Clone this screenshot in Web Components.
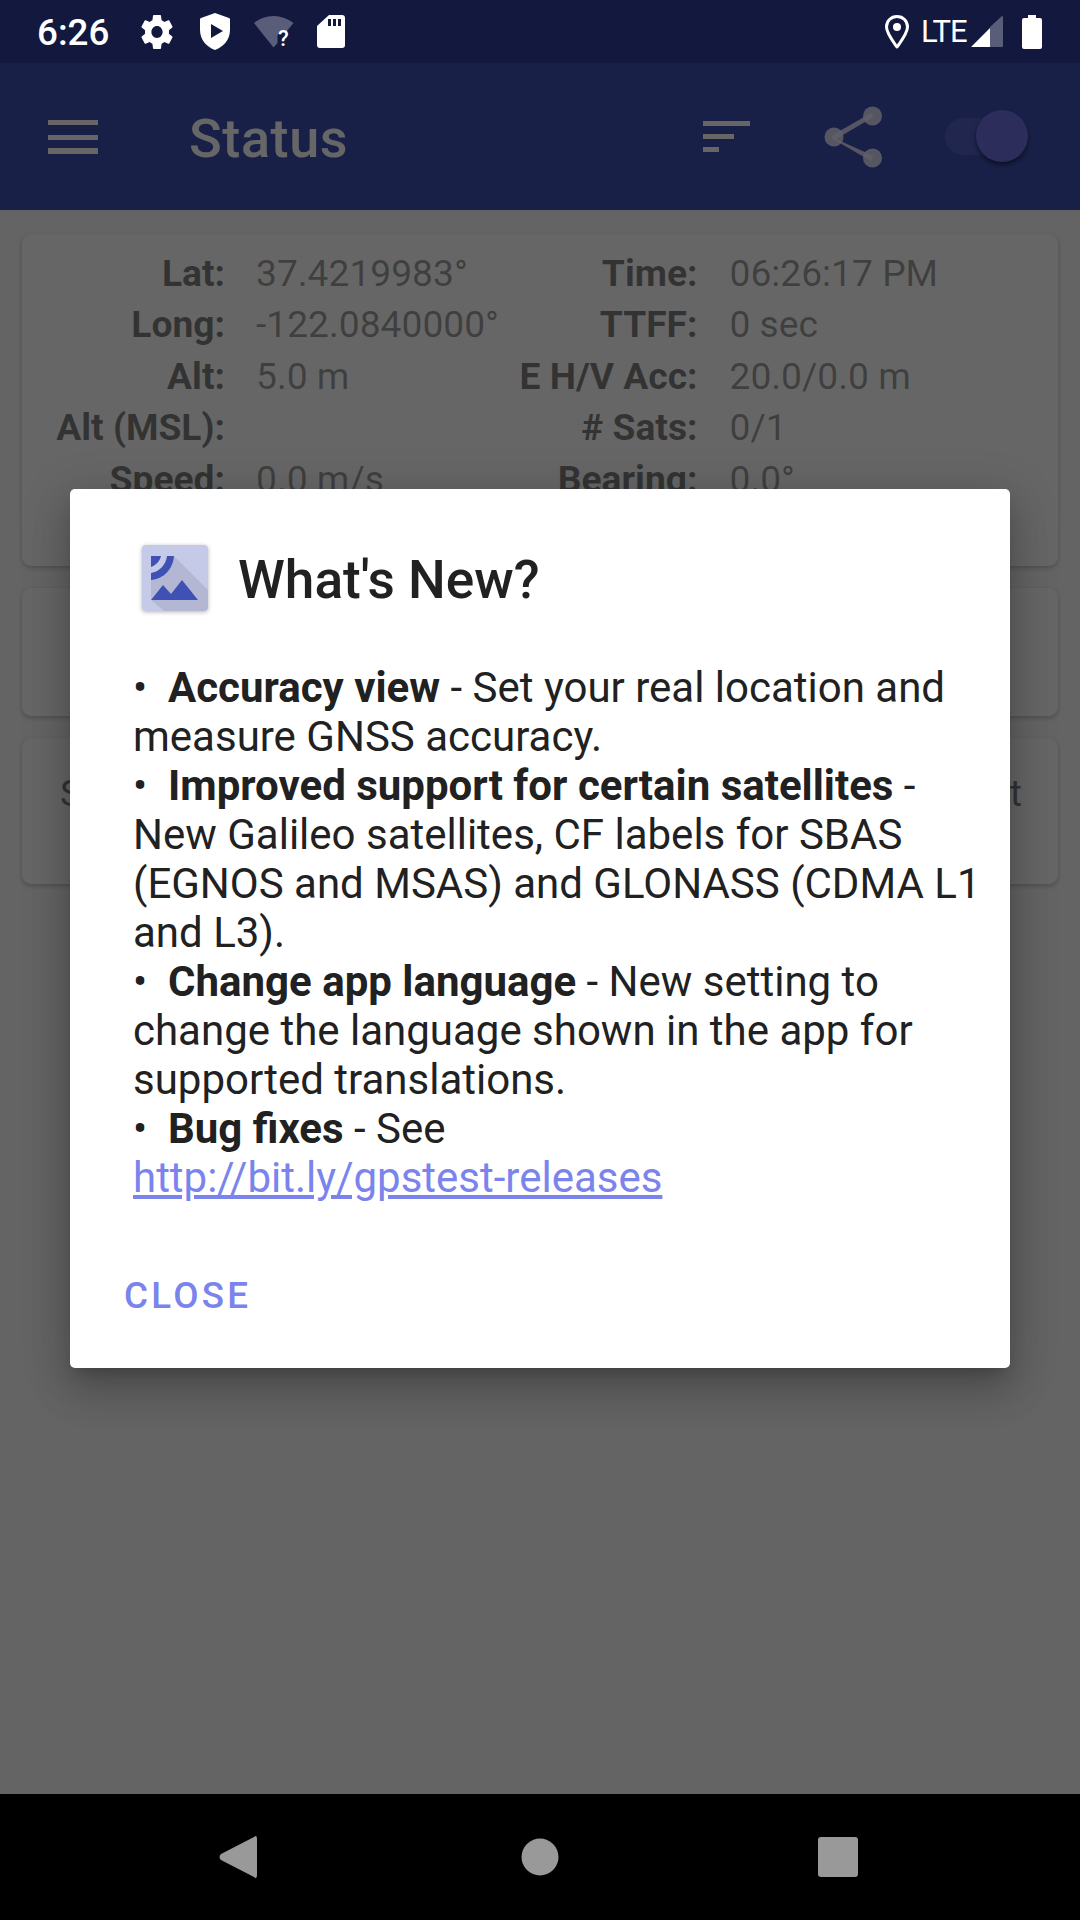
<!DOCTYPE html>
<html>
<head>
<meta charset="utf-8">
<title>GPSTest</title>
<style>
    html, body { margin: 0; padding: 0; background: #000; }
</style>
</head>
<body>
<gps-app></gps-app>
<script>
window.customElements.define("status-bar", class extends HTMLElement {
    #template = `
        <style>
            :host {
                display: flex;
                align-items: center;
                height: 63px;
                background: #13183f;
                color: #fff;
                font-family: Roboto, sans-serif;
            }
            .time { font-size: 36.75px; font-weight: 500; margin-left: 37px; width: 104px; line-height: 63px; position: relative; top: 1px; }
            svg { display: block; flex: none; }
            .lte { font-size: 31px; width: 51px; margin-left: 12px; line-height: 63px; position: relative; top: 0; letter-spacing: -1px; font-weight: 400; }
            .spacer { flex: 1; }
        </style>
        <span class="time">6:26</span>
        <svg width="32" height="34" viewBox="0 0 24 24" preserveAspectRatio="none"><path fill="#fff" d="M19.43 12.98c.04-.32.07-.64.07-.98s-.03-.66-.07-.98l2.11-1.65c.19-.15.24-.42.12-.64l-2-3.46c-.12-.22-.39-.3-.61-.22l-2.49 1c-.52-.4-1.08-.73-1.69-.98l-.38-2.65C14.46 2.18 14.25 2 14 2h-4c-.25 0-.46.18-.49.42l-.38 2.65c-.61.25-1.17.59-1.69.98l-2.49-1c-.23-.09-.49 0-.61.22l-2 3.46c-.13.22-.07.49.12.64l2.11 1.65c-.04.32-.07.65-.07.98s.03.66.07.98l-2.11 1.65c-.19.15-.24.42-.12.64l2 3.46c.12.22.39.3.61.22l2.49-1c.52.4 1.08.73 1.69.98l.38 2.65c.03.24.24.42.49.42h4c.25 0 .46-.18.49-.42l.38-2.65c.61-.25 1.17-.59 1.69-.98l2.49 1c.23.09.49 0 .61-.22l2-3.46c.12-.22.07-.49-.12-.64l-2.11-1.65zM12 15.5c-1.93 0-3.5-1.57-3.5-3.5s1.57-3.5 3.5-3.5 3.5 1.57 3.5 3.5-1.57 3.5-3.5 3.5z" transform="translate(-2.4 -2.4) scale(1.2)"/></svg>
        <svg style="margin-left:27px" width="30" height="37" viewBox="0 0 30 37"><path fill="#fff" fill-rule="evenodd" d="M15 0 L29 5 Q30 5.4 30 6.5 V17 C30 27 23 34 15 37 C7 34 0 27 0 17 V6.5 Q0 5.4 1 5 Z M11 11 V25 L23 18 Z"/></svg>
        <svg style="margin-left:24px" width="40" height="46" viewBox="0 -7 40 46"><path fill="#fff" fill-opacity=".3" d="M0 7 C5 3 12 0 19.5 0 C27 0 34 3 39.5 7 L33 15 H29 C26 15 24 17 23.5 20 V27 L19.5 31.5 Z"/><text x="24" y="30" font-family="Roboto, sans-serif" font-size="22" font-weight="500" fill="#fff">?</text></svg>
        <svg style="margin-left:23px" width="28" height="33" viewBox="0 0 28 33"><path fill="#fff" fill-rule="evenodd" d="M12 0 H25 Q28 0 28 3 V30 Q28 33 25 33 H3 Q0 33 0 30 V11 Z M11 4 V11 H14 V4 Z M16 4 V11 H19 V4 Z M21 4 V11 H24 V4 Z"/></svg>
        <span class="spacer"></span>
        <svg width="24" height="34" viewBox="0 0 24 34"><path fill="none" stroke="#fff" stroke-width="3" stroke-linejoin="round" d="M12 32 C7 25 1.5 18 1.5 12 C1.5 6 6 1.5 12 1.5 C18 1.5 22.5 6 22.5 12 C22.5 18 17 25 12 32 Z"/><circle cx="12" cy="12" r="4" fill="#fff"/></svg>
        <span class="lte">LTE</span>
        <svg style="margin-left:-1px" width="32" height="32" viewBox="0 0 32 32"><path fill="#fff" fill-opacity=".3" d="M19 11 L31 0 Q32 0 32 1 V30 Q32 31 31 31 H19 Z"/><path fill="#fff" d="M0 31 L19 12 V31 Z"/></svg>
        <svg style="margin-left:19px;margin-right:38px" width="20" height="34" viewBox="0 0 20 34"><path fill="#fff" d="M6 0 H14 V3 H18 Q20 3 20 5 V32 Q20 34 18 34 H2 Q0 34 0 32 V5 Q0 3 2 3 H6 Z"/></svg>
    `;

    constructor() {
        super();
        this.attachShadow({ mode: "open" });
        this.shadowRoot.innerHTML = this.#template;
    }
});

window.customElements.define("app-toolbar", class extends HTMLElement {
    #template = `
        <style>
            :host {
                display: flex;
                align-items: center;
                flex: none;
                height: 147px;
                background: #3f51b5;
                color: #fff;
                font-family: Roboto, sans-serif;
            }
            svg { display: block; flex: none; }
            .title { font-size: 54px; font-weight: 500; letter-spacing: .6px; margin-left: 91px; flex: 1; position: relative; top: 2px; }
            .switch { position: relative; width: 84px; height: 54px; margin-left: 63px; margin-right: 51px; flex: none; }
            .track { position: absolute; left: 0; top: 8px; width: 64px; height: 37px; border-radius: 19px; background: #7a82e8; opacity: .3; }
            .thumb { position: absolute; left: 31px; top: 0; width: 52px; height: 52px; border-radius: 50%; background: #6e72e0; box-shadow: 0 3px 5px rgba(0,0,0,.5); }
        </style>
        <svg style="margin-left:48px" width="50" height="34" viewBox="0 0 50 34"><path fill="#fff" d="M0 0 H50 V5 H0 Z M0 15 H50 V20 H0 Z M0 28 H50 V34 H0 Z"/></svg>
        <span class="title">Status</span>
        <svg style="margin-right:-1px" width="47" height="31" viewBox="0 0 47 31"><path fill="#fff" d="M0 0 H47 V5 H0 Z M0 13 H31 V18 H0 Z M0 26 H16 V31 H0 Z"/></svg>
        <svg style="margin-left:75px" width="58" height="62" viewBox="0 0 58 62"><g fill="#f0f0ff" fill-opacity=".85"><circle cx="48.5" cy="10" r="9.5"/><circle cx="10" cy="31" r="9.5"/><circle cx="48.5" cy="52" r="9.5"/><path d="M8 29.5 L47 7 L49.5 11 L12 33 L49.5 50 L47 55 L8 32.5 Z"/></g></svg>
        <div class="switch"><div class="track"></div><div class="thumb"></div></div>
    `;

    constructor() {
        super();
        this.attachShadow({ mode: "open" });
        this.shadowRoot.innerHTML = this.#template;
    }
});

window.customElements.define("status-card", class extends HTMLElement {
    #template = `
        <style>
            :host {
                display: block;
                background: #fff;
                border-radius: 9px;
                box-shadow: 0 2px 5px rgba(0,0,0,.22);
                box-sizing: border-box;
                font-family: Roboto, sans-serif;
                font-size: 37.2px;
                color: #000;
            }
        </style>
        <slot></slot>
    `;

    constructor() {
        super();
        this.attachShadow({ mode: "open" });
        this.shadowRoot.innerHTML = this.#template;
    }
});

window.customElements.define("fix-grid", class extends HTMLElement {
    #template = `
        <style>
            :host {
                display: grid;
                grid-template-columns: 203px 273.5px 199px 1fr;
                grid-auto-rows: 51.4px;
                padding-top: 14px;
                font-family: Roboto, sans-serif;
                font-size: 37.2px;
                line-height: 51.4px;
                white-space: nowrap;
            }
            .l { text-align: right; font-weight: 700; color: rgba(0,0,0,.5); }
            .v { padding-left: 31px; color: rgba(0,0,0,.38); }
            .v.r { padding-left: 32px; }
        </style>
        <span class="l">Lat:</span><span class="v">37.4219983°</span><span class="l">Time:</span><span class="v r">06:26:17 PM</span>
        <span class="l">Long:</span><span class="v">-122.0840000°</span><span class="l">TTFF:</span><span class="v r">0 sec</span>
        <span class="l">Alt:</span><span class="v">5.0 m</span><span class="l">E H/V Acc:</span><span class="v r">20.0/0.0 m</span>
        <span class="l">Alt (MSL):</span><span class="v"></span><span class="l"># Sats:</span><span class="v r">0/1</span>
        <span class="l">Speed:</span><span class="v">0.0 m/s</span><span class="l">Bearing:</span><span class="v r">0.0°</span>
    `;

    constructor() {
        super();
        this.attachShadow({ mode: "open" });
        this.shadowRoot.innerHTML = this.#template;
    }
});

window.customElements.define("news-item", class extends HTMLElement {
    #template = `
        <style>
            :host { display: block; }
            ::slotted(b) { font-weight: 700; }
            ::slotted(a) { display: inline-block; color: #7b84ec; text-decoration: underline; }
        </style>
        <span>•&nbsp;&nbsp;</span><slot></slot>
    `;

    constructor() {
        super();
        this.attachShadow({ mode: "open" });
        this.shadowRoot.innerHTML = this.#template;
    }
});

window.customElements.define("whats-new-dialog", class extends HTMLElement {
    #template = `
        <style>
            :host {
                display: flex;
                flex-direction: column;
                width: 940px;
                height: 879px;
                box-sizing: border-box;
                background: #fff;
                border-radius: 5px;
                box-shadow: 0 24px 38px 3px rgba(0,0,0,.14), 0 9px 46px 8px rgba(0,0,0,.12), 0 11px 15px -7px rgba(0,0,0,.2);
                font-family: Roboto, sans-serif;
                color: #212121;
                padding: 56px 27px 0 63px;
            }
            header { display: flex; align-items: center; margin-left: 8px; height: 68px; gap: 29px; }
            h1 { margin: 0; font-size: 53.2px; font-weight: 500; line-height: 68px; position: relative; top: 1px; }
            svg { display: block; flex: none; filter: drop-shadow(0 1px 2px rgba(0,0,0,.3)); }
            .body { margin-top: 50px; font-size: 42px; line-height: 49px; }
            button {
                all: unset;
                align-self: flex-start;
                margin: 72px 0 0 -9px;
                font-size: 36.75px;
                line-height: 43px;
                font-weight: 500;
                letter-spacing: .0892857em;
                color: #7b84ec;
            }
        </style>
        <header>
            <svg width="68" height="68" viewBox="0 0 68 68">
                <rect x="1" y="0" width="66" height="66" rx="4" fill="#c5cae9"/>
                <path d="M33 11 L67 45 V62 Q67 66 63 66 H23 L10 55 V35 C23 34 32 24 33 11 Z" fill="#000" fill-opacity=".09"/>
                <path fill="#3f51b5" fill-rule="evenodd" d="M10 11 H20 C19 16 15 20 10 22 Z M26 11 H33 C32 24 23 34 10 35 V28 C18 27 25 20 26 11 Z"/>
                <path fill="#3f51b5" d="M10 55 L22 40 L30 49 L41 35 L57 55 Z"/>
            </svg>
            <h1>What's New?</h1>
        </header>
        <div class="body"><slot></slot></div>
        <button type="button">CLOSE</button>
    `;

    constructor() {
        super();
        this.attachShadow({ mode: "open" });
        this.shadowRoot.innerHTML = this.#template;
    }
});

window.customElements.define("nav-bar", class extends HTMLElement {
    #template = `
        <style>
            :host {
                display: block;
                height: 126px;
                background: #000;
                flex: none;
            }
            svg { display: block; }
        </style>
        <svg width="1080" height="126" viewBox="0 0 1080 126">
            <path fill="#999" d="M254 43 Q257 40 257 45 V81 Q257 86 254 83 L221 66 Q218 63 221 60 Z"/>
            <circle cx="540" cy="63" r="18.5" fill="#999"/>
            <rect x="818" y="43" width="40" height="40" rx="3" fill="#999"/>
        </svg>
    `;

    constructor() {
        super();
        this.attachShadow({ mode: "open" });
        this.shadowRoot.innerHTML = this.#template;
    }
});

window.customElements.define("gps-app", class extends HTMLElement {
    #template = `
        <style>
            :host {
                display: flex;
                flex-direction: column;
                width: 1080px;
                height: 1920px;
                overflow: hidden;
            }
            .area { position: relative; flex: 1; display: flex; flex-direction: column; background: #fafafa; }
            .content { flex: 1; display: flex; flex-direction: column; gap: 22px; padding: 24px 22px 0; }
            .c1 { height: 332px; }
            .c2 { height: 128px; }
            .c3 {
                height: 146px;
                display: flex;
                justify-content: space-between;
                padding: 33px 36px 0 38px;
                color: rgba(0,0,0,.5);
            }
            .scrim {
                position: absolute;
                inset: 0;
                background: rgba(0,0,0,.6);
                display: flex;
                align-items: center;
                justify-content: center;
            }
        </style>
        <status-bar></status-bar>
        <div class="area">
            <app-toolbar></app-toolbar>
            <div class="content">
                <status-card class="c1"><fix-grid></fix-grid></status-card>
                <status-card class="c2"></status-card>
                <status-card class="c3"><span>S</span><span>t</span></status-card>
            </div>
            <div class="scrim">
                <whats-new-dialog><news-item><b>Accuracy view</b> - Set your real location and measure GNSS accuracy.</news-item><news-item><b>Improved support for certain satellites</b> - New Galileo satellites, CF labels for SBAS (EGNOS and MSAS) and GLONASS (CDMA L1 and L3).</news-item><news-item><b>Change app language</b> - New setting to change the language shown in the app for supported translations.</news-item><news-item><b>Bug fixes</b> - See <a href="#">http://bit.ly/gpstest-releases</a></news-item></whats-new-dialog>
            </div>
        </div>
        <nav-bar></nav-bar>
    `;

    constructor() {
        super();
        this.attachShadow({ mode: "open" });
        this.shadowRoot.innerHTML = this.#template;
    }
});
</script>
</body>
</html>
